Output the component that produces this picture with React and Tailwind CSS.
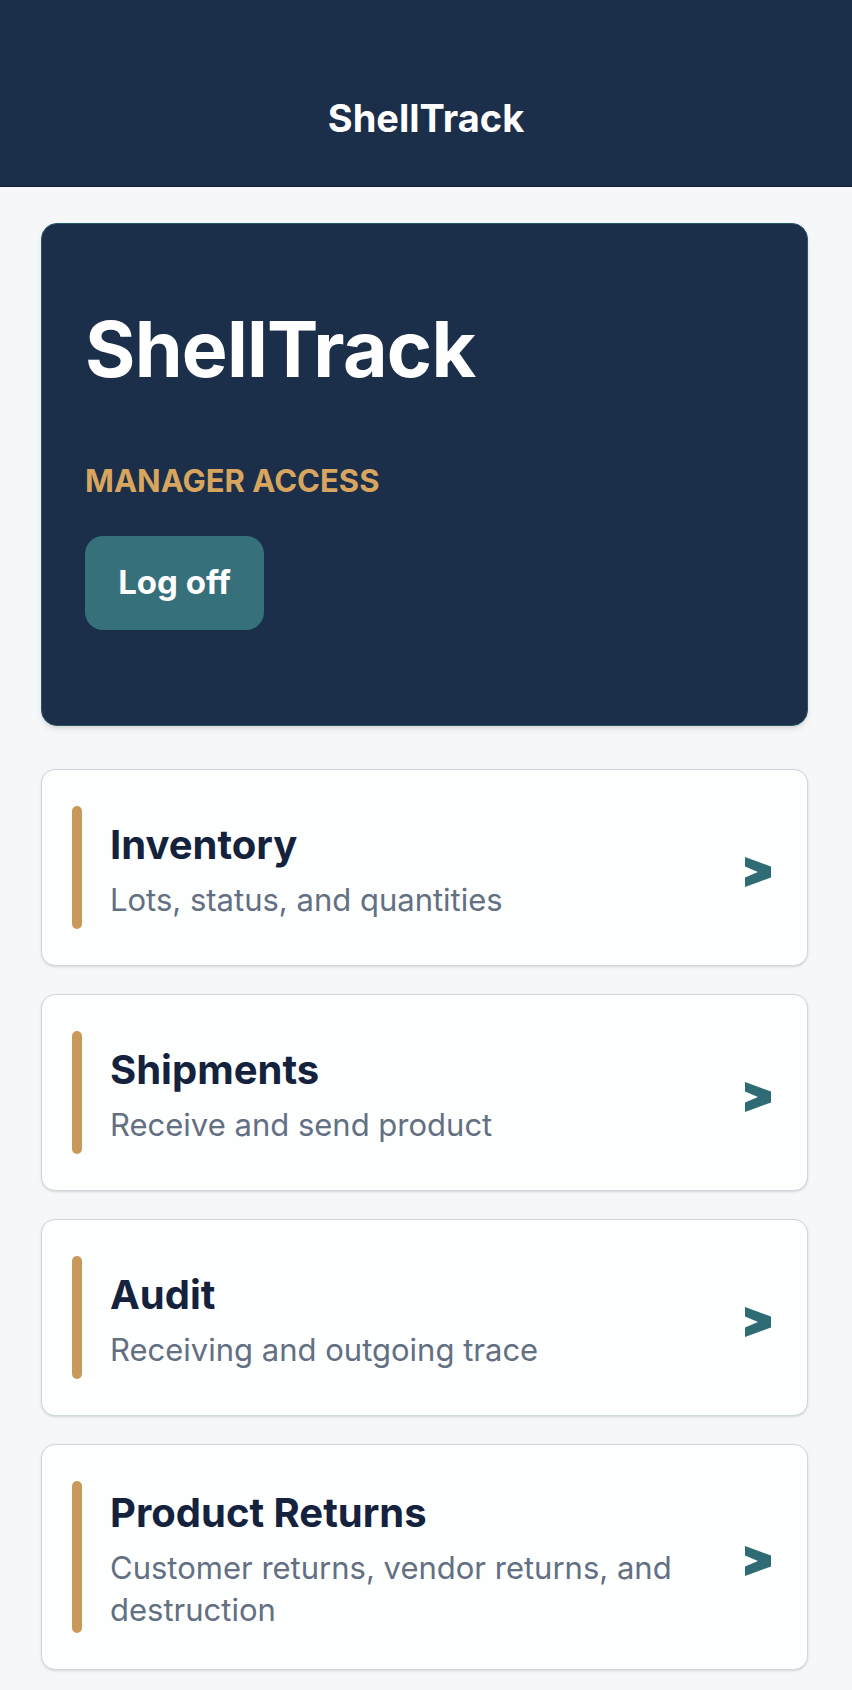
import { useState } from 'react';

const SECTIONS = [
  { id: 'inventory', title: 'Inventory',       subtitle: 'Lots, status, and quantities' },
  { id: 'shipments', title: 'Shipments',       subtitle: 'Receive and send product' },
  { id: 'audit',     title: 'Audit',           subtitle: 'Receiving and outgoing trace' },
  { id: 'returns',   title: 'Product Returns', subtitle: 'Customer returns, vendor returns, and destruction' },
];

function Chevron() {
  return (
    <svg className="w-[26px] h-[30px] shrink-0 mt-[8px]" viewBox="0 0 26 30" fill="#2e6b74">
      <polygon points="0,0 26,9.5 26,20.5 0,30 0,20.5 13,15 0,9.5" />
    </svg>
  );
}

export default function App() {
  const [loggedIn, setLoggedIn] = useState(true);

  return (
    <div
      className="min-h-screen bg-[#f5f7f8] pb-[18px]"
      style={{ fontFamily: 'Inter, "Noto Sans", "Liberation Sans", sans-serif' }}
    >
      {/* Top bar */}
      <header className="h-[187px] bg-[#1b2e4a] border-b border-[#0f1e33] pt-[94px] text-center">
        <h1 className="text-[38px] font-bold leading-[48px] text-white">ShellTrack</h1>
      </header>

      <main className="pl-[41px] pr-[44px] pt-[36px]">
        {/* Hero card */}
        <section className="rounded-[16px] bg-[#1b2e4a] border border-[#2a5563] shadow-md pl-[43px] pt-[82px] pb-[95px]">
          <h2 className="text-[77px] font-bold leading-[86px] text-white tracking-[-0.01em]">ShellTrack</h2>
          <p className="mt-[71px] text-[31px] font-bold leading-[36px] text-[#d8a55e]">
            {loggedIn ? 'MANAGER ACCESS' : 'SIGNED OUT'}
          </p>
          <button
            onClick={() => setLoggedIn(!loggedIn)}
            className="mt-[37px] h-[94px] w-[179px] rounded-[18px] bg-[#36707a] text-[33px] font-bold text-white"
          >
            Log off
          </button>
        </section>

        {/* Section links */}
        <nav className="mt-[43px] flex flex-col gap-[28px]">
          {SECTIONS.map((s) => (
            <a
              key={s.id}
              href={`#${s.id}`}
              className="flex items-center rounded-[14px] border-[1.5px] border-[#cdd8dc] bg-[#fdfefe] shadow-sm pl-[30px] pr-[36px] py-[36px]"
            >
              <div className="flex flex-1 items-stretch min-h-[123px] gap-[28px]">
                <span className="w-[10px] shrink-0 rounded-full bg-[#c9995b]" />
                <div className="flex flex-1 flex-col justify-center pt-[6px] pb-[2px] pr-[20px]">
                  <h3 className="text-[40px] font-bold leading-[52px] text-[#14223d]">{s.title}</h3>
                  <p className="mt-[8px] text-[31px] leading-[42px] text-[#636f82]">{s.subtitle}</p>
                </div>
              </div>
              <Chevron />
            </a>
          ))}
        </nav>
      </main>
    </div>
  );
}
